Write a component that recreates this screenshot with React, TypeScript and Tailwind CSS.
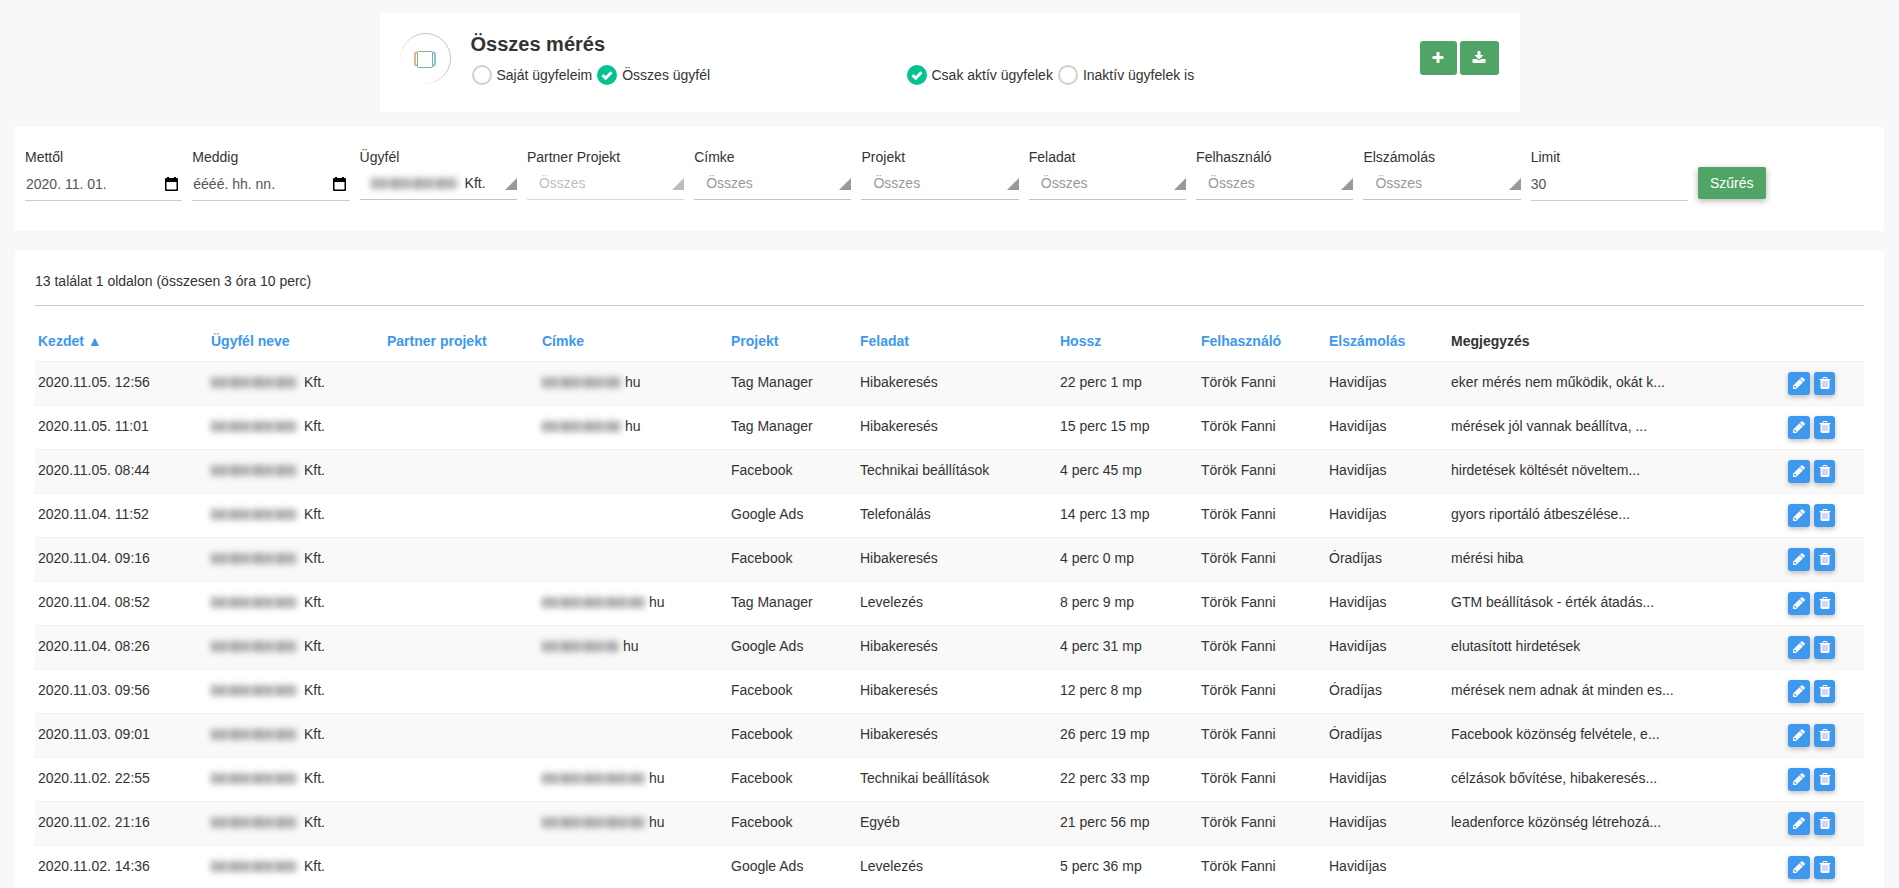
import { useState } from 'react';
import clsx from 'clsx';

const ICONS = {
  plus: 'M1600 736v192q0 40-28 68t-68 28h-416v416q0 40-28 68t-68 28h-192q-40 0-68-28t-28-68v-416h-416q-40 0-68-28t-28-68v-192q0-40 28-68t68-28h416v-416q0-40 28-68t68-28h192q40 0 68 28t28 68v416h416q40 0 68 28t28 68z',
  download: 'M1344 1344q0-26-19-45t-45-19-45 19-19 45 19 45 45 19 45-19 19-45zm256 0q0-26-19-45t-45-19-45 19-19 45 19 45 45 19 45-19 19-45zm128-224v320q0 40-28 68t-68 28h-1472q-40 0-68-28t-28-68v-320q0-40 28-68t68-28h465l135 136q58 56 136 56t136-56l136-136h464q40 0 68 28t28 68zm-325-569q17 41-14 70l-448 448q-18 19-45 19t-45-19l-448-448q-31-29-14-70 17-39 59-39h256v-448q0-26 19-45t45-19h256q26 0 45 19t19 45v448h256q42 0 59 39z',
  pencil: 'M491 1536l91-91-235-235-91 91v107h128v128h107zM960 416l416 416-832 832h-416v-416zm683 96q0 53-37 90l-166 166-416-416 166-165q36-38 90-38 53 0 91 38l235 234q37 39 37 91z',
  trash: 'M704 1376v-704q0-14-9-23t-23-9h-64q-14 0-23 9t-9 23v704q0 14 9 23t23 9h64q14 0 23-9t9-23zm256 0v-704q0-14-9-23t-23-9h-64q-14 0-23 9t-9 23v704q0 14 9 23t23 9h64q14 0 23-9t9-23zm256 0v-704q0-14-9-23t-23-9h-64q-14 0-23 9t-9 23v704q0 14 9 23t23 9h64q14 0 23-9t9-23zm-544-992h448l-48-117q-7-9-17-11h-317q-10 2-17 11zm928 32v64q0 14-9 23t-23 9h-96v948q0 83-47 143.5t-113 60.5h-832q-66 0-113-58.5t-47-141.5v-952h-96q-14 0-23-9t-9-23v-64q0-14 9-23t23-9h309l70-167q15-37 54-63t79-26h320q40 0 79 26t54 63l70 167h309q14 0 23 9t9 23z',
};

const Icon = ({ name, className }: { name: keyof typeof ICONS; className?: string }) => (
  <svg viewBox="0 0 1792 1792" className={clsx('fill-current', className)} aria-hidden="true">
    {name === 'trash' && <path d="M512 600h768v850H512z" fill="#b3a4f7" />}
    <path d={ICONS[name]} />
  </svg>
);

const COLUMNS = [
  { name: 'Kezdet ▲', width: 'w-[173px]' },
  { name: 'Ügyfél neve', width: 'w-[176px]' },
  { name: 'Partner projekt', width: 'w-[155px]' },
  { name: 'Címke', width: 'w-[189px]' },
  { name: 'Projekt', width: 'w-[129px]' },
  { name: 'Feladat', width: 'w-[200px]' },
  { name: 'Hossz', width: 'w-[141px]' },
  { name: 'Felhasználó', width: 'w-[128px]' },
  { name: 'Elszámolás', width: 'w-[122px]' },
];

const TAG_WIDTHS = { short: 'w-[81px]', medium: 'w-[83px]', long: 'w-[107px]' };

type Row = {
  start: string;
  tag?: keyof typeof TAG_WIDTHS;
  project: string;
  task: string;
  length: string;
  billing: string;
  note: string;
};

const ROWS: Row[] = [
  { start: '2020.11.05. 12:56', tag: 'medium', project: 'Tag Manager', task: 'Hibakeresés', length: '22 perc 1 mp', billing: 'Havidíjas', note: 'eker mérés nem működik, okát k...' },
  { start: '2020.11.05. 11:01', tag: 'medium', project: 'Tag Manager', task: 'Hibakeresés', length: '15 perc 15 mp', billing: 'Havidíjas', note: 'mérések jól vannak beállítva, ...' },
  { start: '2020.11.05. 08:44', project: 'Facebook', task: 'Technikai beállítások', length: '4 perc 45 mp', billing: 'Havidíjas', note: 'hirdetések költését növeltem...' },
  { start: '2020.11.04. 11:52', project: 'Google Ads', task: 'Telefonálás', length: '14 perc 13 mp', billing: 'Havidíjas', note: 'gyors riportáló átbeszélése...' },
  { start: '2020.11.04. 09:16', project: 'Facebook', task: 'Hibakeresés', length: '4 perc 0 mp', billing: 'Óradíjas', note: 'mérési hiba' },
  { start: '2020.11.04. 08:52', tag: 'long', project: 'Tag Manager', task: 'Levelezés', length: '8 perc 9 mp', billing: 'Havidíjas', note: 'GTM beállítások - érték átadás...' },
  { start: '2020.11.04. 08:26', tag: 'short', project: 'Google Ads', task: 'Hibakeresés', length: '4 perc 31 mp', billing: 'Havidíjas', note: 'elutasított hirdetések' },
  { start: '2020.11.03. 09:56', project: 'Facebook', task: 'Hibakeresés', length: '12 perc 8 mp', billing: 'Óradíjas', note: 'mérések nem adnak át minden es...' },
  { start: '2020.11.03. 09:01', project: 'Facebook', task: 'Hibakeresés', length: '26 perc 19 mp', billing: 'Óradíjas', note: 'Facebook közönség felvétele, e...' },
  { start: '2020.11.02. 22:55', tag: 'long', project: 'Facebook', task: 'Technikai beállítások', length: '22 perc 33 mp', billing: 'Havidíjas', note: 'célzások bővítése, hibakeresés...' },
  { start: '2020.11.02. 21:16', tag: 'long', project: 'Facebook', task: 'Egyéb', length: '21 perc 56 mp', billing: 'Havidíjas', note: 'leadenforce közönség létrehozá...' },
  { start: '2020.11.02. 14:36', project: 'Google Ads', task: 'Levelezés', length: '5 perc 36 mp', billing: 'Havidíjas', note: '' },
];

// Masked part of a client name or a tag
const Masked = ({ className }: { className: string }) => (
  <span className={clsx('inline-flex h-4 items-center pr-1', className)} aria-hidden="true">
    <span className="h-[11px] w-full bg-[repeating-linear-gradient(90deg,#777_0px,#a8a8a8_6px,#8a8a8a_12px,#c4c4c4_17px,#808080_23px)] opacity-75 blur-[3px]" />
  </span>
);

const Choice = ({ name, label, checked, onChange }: { name: string; label: string; checked: boolean; onChange: () => void }) => (
  <label className="flex items-center gap-[5px]">
    <span className="relative flex size-5">
      <input
        type="radio"
        name={name}
        checked={checked}
        onChange={onChange}
        className="size-5 appearance-none rounded-full border-2 border-[#d5cfc7] bg-white checked:border-[#05c293] checked:bg-[#05c293]"
      />
      {checked && (
        <svg viewBox="0 0 20 20" className="pointer-events-none absolute inset-0 size-5" aria-hidden="true">
          <path d="M5.5 10.2 8.7 13.2 14.5 7.2" fill="none" stroke="#fff" strokeWidth="3" />
        </svg>
      )}
    </span>
    {label}
  </label>
);

const CalendarIcon = () => (
  <svg viewBox="0 0 13 15" className="h-[15px] w-[13px]" aria-hidden="true">
    <path d="M2 0h2v1h5V0h2v1h1q1 0 1 1v11q0 1-1 1H1q-1 0-1-1V2q0-1 1-1h1zM1.5 5v7.5h10V5z" fill="#000" fillRule="evenodd" />
  </svg>
);

const DateField = ({ id, label, value }: { id: string; label: string; value: string }) => (
  <div className="w-[9%] px-[5px]">
    <label htmlFor={id} className="block leading-5">{label}</label>
    <div className="mt-1 flex h-[30px] items-center border-b border-[#ccc] pb-[3px]">
      <input id={id} type="text" defaultValue={value} className="w-full min-w-0 pl-px text-[#555] outline-none" />
      <button type="button" aria-label={label} className="mr-1 shrink-0">
        <CalendarIcon />
      </button>
    </div>
  </div>
);

const Corner = () => (
  <svg viewBox="0 0 12 12" className="pointer-events-none absolute right-0 top-[7px] size-3" aria-hidden="true">
    <path d="M12 0v12H0z" fill="#999" />
  </svg>
);

const SelectField = ({ id, label, disabled }: { id: string; label: string; disabled?: boolean }) => (
  <div className="w-[9%] px-[5px]">
    <label htmlFor={id} className="block leading-5">{label}</label>
    <div className={clsx('relative mt-1 flex h-[29px] items-start border-b border-[#c4c4c4]', disabled && 'opacity-65')}>
      <select id={id} disabled={disabled} className="h-6 w-full appearance-none bg-transparent pl-3 text-[#999] outline-none">
        <option>Összes</option>
      </select>
      <Corner />
    </div>
  </div>
);

export default function App() {
  const [scope, setScope] = useState('all');
  const [status, setStatus] = useState('active');

  return (
    <div className="min-h-screen bg-[#f7f8fa] px-[15px] pt-[13px] font-['Liberation_Sans',Arial,sans-serif] text-sm text-[#333]">
      <header className="mx-auto flex min-h-[99px] max-w-[1140px] items-start bg-white px-5 pt-5">
        <svg viewBox="0 0 51 51" className="size-[51px] shrink-0" fill="none" aria-hidden="true">
          <defs>
            <linearGradient id="ring" x1="1" y1="0" x2="0" y2="1">
              <stop offset="0.4" stopColor="#c4c4c4" />
              <stop offset="0.8" stopColor="#fff" />
            </linearGradient>
          </defs>
          <circle cx="25.5" cy="25.5" r="25" stroke="url(#ring)" />
          <path d="M17 19.500h-1q-1 1-1 2v9q0 1 1 2h1" stroke="#deb684" strokeWidth="2" />
          <path d="M33 19.500h1q1 1 1 2v9q0 1-1 2h-1" stroke="#8cc4e0" strokeWidth="2" />
          <rect x="17.5" y="18.500" width="15" height="16" rx="1" fill="#fff" stroke="#7fb08e" />
        </svg>
        <div className="ml-5 grow">
          <h1 className="pt-px text-xl font-bold leading-5">Összes mérés</h1>
          <div className="mt-[11px] flex">
            <div className="flex w-[436px] gap-[5px] pl-px">
              <Choice name="scope" label="Saját ügyfeleim" checked={scope === 'own'} onChange={() => setScope('own')} />
              <Choice name="scope" label="Összes ügyfél" checked={scope === 'all'} onChange={() => setScope('all')} />
            </div>
            <div className="flex gap-[5px]">
              <Choice name="status" label="Csak aktív ügyfelek" checked={status === 'active'} onChange={() => setStatus('active')} />
              <Choice name="status" label="Inaktív ügyfelek is" checked={status === 'any'} onChange={() => setStatus('any')} />
            </div>
          </div>
        </div>
        <div className="mr-px mt-2 flex gap-[3px]">
          <button type="button" aria-label="Új mérés" className="flex h-[34px] w-[37px] items-center justify-center rounded-[3px] bg-[#50a566] text-white">
            <Icon name="plus" className="size-[14px]" />
          </button>
          <button type="button" aria-label="Letöltés" className="flex h-[34px] w-[39px] items-center justify-center rounded-[3px] bg-[#50a566] text-white">
            <Icon name="download" className="size-[14px]" />
          </button>
        </div>
      </header>

      <form className="mt-[15px] flex min-h-[104px] items-start bg-white px-[5px] pt-5">
        <DateField id="from" label="Mettől" value="2020. 11. 01." />
        <DateField id="to" label="Meddig" value="éééé. hh. nn." />
        <div className="w-[9%] px-[5px]">
          <label htmlFor="client" className="block leading-5">Ügyfél</label>
          <div className="relative mt-1 flex h-[29px] items-start border-b border-[#c4c4c4] pl-[11px]">
            <Masked className="mt-1 w-[91px] shrink-0" />
            <select id="client" className="h-6 w-full min-w-0 appearance-none bg-transparent pl-[3px] text-[#333] outline-none">
              <option>Kft.</option>
            </select>
            <Corner />
          </div>
        </div>
        <SelectField id="partner" label="Partner Projekt" disabled />
        <SelectField id="tag" label="Címke" />
        <SelectField id="project" label="Projekt" />
        <SelectField id="task" label="Feladat" />
        <SelectField id="user" label="Felhasználó" />
        <SelectField id="billing" label="Elszámolás" />
        <div className="w-[9%] px-[5px]">
          <label htmlFor="limit" className="block leading-5">Limit</label>
          <input id="limit" type="text" defaultValue="30" className="mt-1 block h-[30px] w-full border-b border-[#ccc] pb-[3px] text-[#555] outline-none" />
        </div>
        <button type="button" className="ml-[5px] mt-5 h-8 rounded-[2px] bg-[#50a566] px-3 text-white shadow-[0_2px_6px_rgba(0,0,0,0.3)]">
          Szűrés
        </button>
      </form>

      <main className="mt-5 bg-white px-5 pb-5 pt-5">
        <p className="leading-5">13 találat 1 oldalon (összesen 3 óra 10 perc)</p>
        <hr className="mb-[15px] mt-[14px] border-[#ccc]" />
        <table className="w-full text-left">
          <thead>
            <tr className="h-10">
              {COLUMNS.map((col) => (
                <th key={col.name} className={clsx('px-[3px]', col.width)}>
                  <a href="#" className="text-[#3d98ee]">{col.name}</a>
                </th>
              ))}
              <th className="px-[3px]">Megjegyzés</th>
              <th className="w-[79px]" />
            </tr>
          </thead>
          <tbody>
            {ROWS.map((row) => (
              <tr key={row.start} className="h-11 border-t border-[#f3f3f3] odd:bg-[#f9f9f9]">
                <td className="px-[3px] pb-[2px]">{row.start}</td>
                <td className="px-[3px] pb-[2px]">
                  <div className="flex items-center gap-[3px]">
                    <Masked className="w-[90px]" />
                    Kft.
                  </div>
                </td>
                <td />
                <td className="px-[3px] pb-[2px]">
                  {row.tag && (
                    <div className="flex items-center">
                      <Masked className={TAG_WIDTHS[row.tag]} />
                      hu
                    </div>
                  )}
                </td>
                <td className="px-[3px] pb-[2px]">{row.project}</td>
                <td className="px-[3px] pb-[2px]">{row.task}</td>
                <td className="px-[3px] pb-[2px]">{row.length}</td>
                <td className="px-[3px] pb-[2px]">Török Fanni</td>
                <td className="px-[3px] pb-[2px]">{row.billing}</td>
                <td className="px-[3px] pb-[2px]">{row.note}</td>
                <td className="px-[3px]">
                  <div className="flex gap-1">
                    <button type="button" aria-label="Szerkesztés" className="flex h-[23px] w-[22px] items-center justify-center rounded-[3px] bg-[#3d98ee] text-white shadow-[0_2px_5px_rgba(0,0,0,0.26)]">
                      <Icon name="pencil" className="size-[14px]" />
                    </button>
                    <button type="button" aria-label="Törlés" className="flex h-[23px] w-[21px] items-center justify-center rounded-[3px] bg-[#3d98ee] text-white shadow-[0_2px_5px_rgba(0,0,0,0.26)]">
                      <Icon name="trash" className="size-[14px]" />
                    </button>
                  </div>
                </td>
              </tr>
            ))}
          </tbody>
        </table>
      </main>
    </div>
  );
}
